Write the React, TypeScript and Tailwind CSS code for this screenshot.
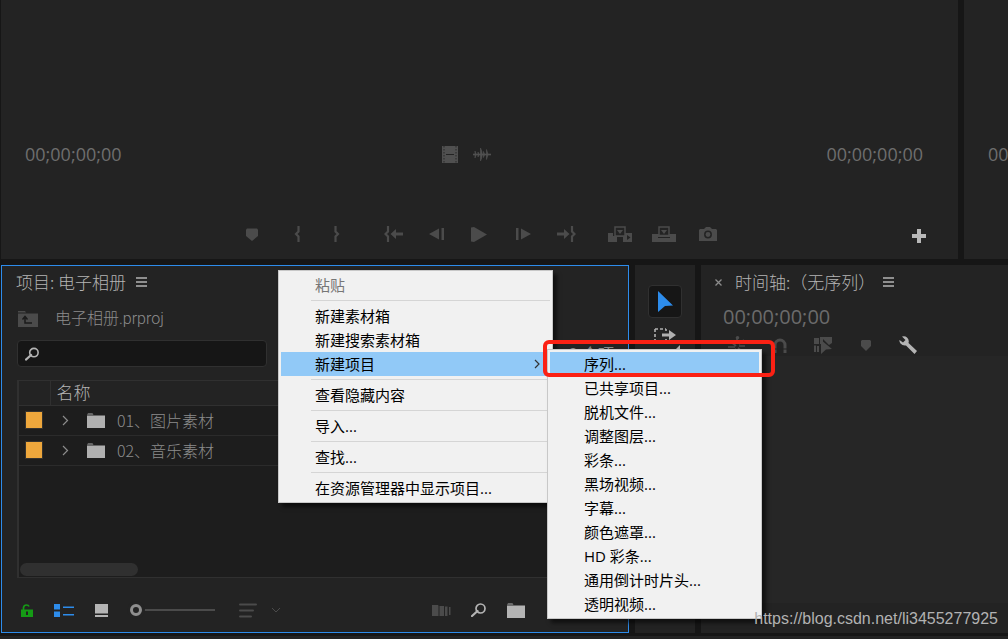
import React from "react";

const CREATE_ITEMS = [
    "序列...",
    "已共享项目...",
    "脱机文件...",
    "调整图层...",
    "彩条...",
    "黑场视频...",
    "字幕...",
    "颜色遮罩...",
    "HD 彩条...",
    "通用倒计时片头...",
    "透明视频...",
];

const CONTEXT_GROUPS = [
    ["粘贴"],
    ["新建素材箱", "新建搜索素材箱", "新建项目"],
    ["查看隐藏内容"],
    ["导入..."],
    ["查找..."],
    ["在资源管理器中显示项目..."],
];

const BINS = ["01、图片素材", "02、音乐素材"];

export default function App() {
    return (
        <div className="relative flex min-h-screen w-full flex-col overflow-hidden bg-[#161616] font-['Open_Sans','Noto_Sans_CJK_SC',sans-serif] text-[#b4b4b4]">
            <div className="flex h-[259px] gap-1.5 pl-px">
                <SourceMonitor />
                <section className="w-11 overflow-hidden bg-[#232323] pt-[142px] pl-6">
                    <Timecode />
                </section>
            </div>

            <div className="mt-1.5 grid flex-1 grid-cols-[minmax(0,628fr)_60px_minmax(0,307fr)] gap-1.5 pl-px">
                <ProjectPanel />
                <ToolPanel />
                <TimelinePanel />
            </div>
            <div className="mt-[3px] h-[3px] bg-[#232323]" />

            <ContextMenu />
            <CreateMenu />

            {/* Highlight frame over the first entry */}
            <div className="pointer-events-none absolute top-[340px] left-[543px] h-[37px] w-[232px] rounded-md border-4 border-[#fb2114]" />
            <a
                href="#blog"
                className="absolute right-2.5 bottom-2 font-['Liberation_Sans',sans-serif] text-base leading-6 text-[#b2b2b2]"
            >
                https://blog.csdn.net/li3455277925
            </a>
        </div>
    );
}

function Timecode({ large = false }: { large?: boolean }) {
    return (
        <span
            className={
                large
                    ? "text-xl leading-6 font-medium whitespace-nowrap text-[#6b6b6b]"
                    : "text-lg leading-6 font-medium whitespace-nowrap text-[#6e6e6e]"
            }
        >
            00;00;00;00
        </span>
    );
}

function IconButton({
    label,
    className = "w-[43px]",
    children,
}: {
    label: string;
    className?: string;
    children: React.ReactNode;
}) {
    return (
        <button type="button" aria-label={label} className={`flex h-6 shrink-0 items-center justify-center ${className}`}>
            {children}
        </button>
    );
}

function Icon({ w, h, children }: { w: number; h: number; children: React.ReactNode }) {
    return (
        <svg width={w} height={h} viewBox={`0 0 ${w} ${h}`} fill="currentColor" aria-hidden="true">
            {children}
        </svg>
    );
}

function SourceMonitor() {
    return (
        <section className="flex flex-1 flex-col bg-[#232323] pt-[142px]">
            <div className="flex h-6 items-center justify-between pr-[35px] pl-6">
                <Timecode />
                <div className="flex items-center gap-[15px] pr-4 text-[#505050]">
                    <Icon w={16} h={17}>
                        <path d="M0 0h16v17H0z" />
                        <path d="M2 0v17M14 0v17" stroke="#292929" strokeDasharray="1.5 1.5" />
                        <path d="M4 8.500h8" stroke="#232323" />
                    </Icon>
                    <Icon w={18} h={13}>
                        <path d="M0 5.700h18v1.600H0z" />
                        <path d="M2 3l1.200 3.500L2 10zM5 4l1.200 2.500L5 9zM7.500 0l1.200 3 .6 3.500-.6 3.500-1.200 3zM10.500 3.500l1.200 3-1.200 3zM13.500 1.500l1.600 5-1.600 5z" stroke="currentColor" strokeWidth=".6" />
                    </Icon>
                </div>
                <Timecode />
            </div>

            <div className="mt-[54px] grid grid-cols-[1fr_auto_1fr] items-center">
                <span />
                <div className="flex h-6 items-center text-[#4b4b4b]">
                    <IconButton label="添加标记" className="mr-[3px] w-11">
                        <MarkerIcon />
                    </IconButton>
                    <IconButton label="标记入点" className="w-10">
                        <Icon w={6} h={16}>
                            <path d="M4.500 0v5.500L2 8l2.500 2.500V16" fill="none" stroke="currentColor" strokeWidth="2.200" />
                        </Icon>
                    </IconButton>
                    <IconButton label="标记出点" className="mr-[15px] w-10">
                        <Icon w={6} h={16}>
                            <path d="M1.500 0v5.500L4 8l-2.500 2.500V16" fill="none" stroke="currentColor" strokeWidth="2.200" />
                        </Icon>
                    </IconButton>
                    <IconButton label="转到入点">
                        <Icon w={19} h={16}>
                            <path d="M4 0v5.500L1.500 8 4 10.500V16" fill="none" stroke="currentColor" strokeWidth="2.200" />
                            <path d="M6.500 8 12 3v3.500h7v3h-7V13z" />
                        </Icon>
                    </IconButton>
                    <IconButton label="后退一帧">
                        <Icon w={15} h={12}>
                            <path d="M0 6 10 .5v11zM12.500 0H15v12h-2.500z" />
                        </Icon>
                    </IconButton>
                    <IconButton label="播放">
                        <Icon w={16} h={15}>
                            <path d="M0 .5 3 0l13 7.500L3 15l-3-.5z" />
                        </Icon>
                    </IconButton>
                    <IconButton label="前进一帧" className="ml-px w-[43px]">
                        <Icon w={15} h={12}>
                            <path d="M15 6 5 .5v11zM0 0h2.500v12H0z" />
                        </Icon>
                    </IconButton>
                    <IconButton label="转到出点" className="mr-2.5 w-[43px]">
                        <Icon w={19} h={16}>
                            <path d="M15 0v5.500L17.500 8 15 10.500V16" fill="none" stroke="currentColor" strokeWidth="2.200" />
                            <path d="M12.500 8 7 3v3.500H0v3h7V13z" />
                        </Icon>
                    </IconButton>
                    <IconButton label="插入" className="w-11">
                        <Icon w={24} h={16}>
                            <path d="M0 7h5v3h11V7h8v9H15v-5H9v5H0z" />
                            <path d="M7 1h10v9H7z" fill="#232323" stroke="currentColor" strokeWidth="1.500" />
                            <path d="M9 4h6l-3 4z" />
                            <path d="m19 9 3.500 2.500L19 14z" fill="#232323" />
                        </Icon>
                    </IconButton>
                    <IconButton label="覆盖" className="w-11">
                        <Icon w={24} h={16}>
                            <path d="M0 8h24v8H0z" />
                            <path d="M7 1h10v8.500H7z" fill="#232323" stroke="currentColor" strokeWidth="1.500" />
                            <path d="M9 4h6l-3 4z" />
                            <path d="M6 11.500h12" stroke="#232323" />
                        </Icon>
                    </IconButton>
                    <IconButton label="导出帧" className="w-11">
                        <Icon w={18} h={14}>
                            <path d="M1 2h4l2-2h4l2 2h4l1 1v11H0V3z" />
                            <circle cx="9" cy="7.500" r="3.200" fill="none" stroke="#232323" strokeWidth="1.500" />
                        </Icon>
                    </IconButton>
                </div>
                <div className="flex justify-end pt-1 pr-[31px] text-[#b8b8b8]">
                    <IconButton label="按钮编辑器" className="w-4">
                        <Icon w={14} h={14}>
                            <path d="M5 0h4v5h5v4H9v5H5V9H0V5h5z" />
                        </Icon>
                    </IconButton>
                </div>
            </div>
        </section>
    );
}

function MarkerIcon() {
    return (
        <Icon w={12} h={13}>
            <path d="M0 1.500 1 .5h10l1 1V8l-6 5-6-5z" />
        </Icon>
    );
}

function SearchIcon() {
    return (
        <Icon w={15} h={14}>
            <circle cx="9.500" cy="5.500" r="4.500" fill="none" stroke="currentColor" strokeWidth="1.700" />
            <path d="M6.500 8 1 13" stroke="currentColor" strokeWidth="2.200" strokeLinecap="round" />
        </Icon>
    );
}

function FolderIcon() {
    return (
        <Icon w={18} h={15}>
            <path d="M0 1.500 1 .5h4.500l1 1zM0 2.500h18V15H0z" />
        </Icon>
    );
}

function MenuIcon() {
    return (
        <Icon w={11} h={10}>
            <path d="M0 1h11M0 5h11M0 9h11" stroke="currentColor" strokeWidth="1.300" />
        </Icon>
    );
}

function ProjectPanel() {
    return (
        <section className="flex flex-col border border-[#2d8ceb] bg-[#232323]">
            <header className="flex h-8 items-center gap-2.5 pl-3.5">
                <h2 className="font-['Noto_Sans_CJK_SC',sans-serif] text-[17px] leading-6 font-light">
                    项目: 电子相册
                </h2>
                <MenuIcon />
            </header>
            <div className="flex h-[42px] items-center gap-[17px] pl-4 text-[#4b4b4b]">
                <Icon w={20} h={16}>
                    <path d="M0 0h7l1 1.500H0zM0 2.500h20V16H0z" />
                    <path d="M7 7v5h7M4.500 8.500 7 5.500l2.500 3" fill="none" stroke="#1b1b1b" strokeWidth="1.500" />
                </Icon>
                <span className="font-['Roboto','Noto_Sans_CJK_SC',sans-serif] text-base font-light text-[#8c8c8c]">
                    电子相册.prproj
                </span>
            </div>
            <div className="flex items-center justify-between pr-3.5 pl-[15px]">
                <label className="flex h-[27px] w-[250px] items-center rounded-sm border border-[#303030] bg-[#161616] pl-[7px]">
                    <SearchIcon />
                    <input
                        type="text"
                        aria-label="搜索"
                        className="h-6 w-full min-w-0 bg-transparent px-2 text-base outline-none"
                    />
                </label>
                <span className="text-base leading-6 text-[#8c8c8c]">2 个项</span>
            </div>

            <div className="mt-[13px] mr-3 ml-[15px] flex flex-1 flex-col border border-l-2 border-[#303030] bg-[#1d1d1d]">
                <table className="w-full border-collapse text-left text-base">
                    <thead>
                        <tr className="h-6 border-b border-[#303030] bg-[#232323] text-[17px] leading-5">
                            <th className="w-[31px] border-r border-[#303030]" />
                            <th className="pl-1.5 font-light">名称</th>
                        </tr>
                    </thead>
                    <tbody>
                        {BINS.map((bin) => (
                            <tr key={bin} className="h-[30px] border-b border-[#2b2b2b] leading-5">
                                <td className="pl-1.5">
                                    <div className="size-[18px] border border-[#34322e] bg-[#eea73c]" />
                                </td>
                                <td>
                                    <div className="flex items-center pl-3 text-[#b0b0b0]">
                                        <Icon w={7} h={11}>
                                            <path d="m1 1 4.500 4.500L1 10" fill="none" stroke="#8c8c8c" strokeWidth="1.200" />
                                        </Icon>
                                        <span className="mr-3 ml-[18px]">
                                            <FolderIcon />
                                        </span>
                                        <span className="font-['Noto_Sans_CJK_SC',sans-serif] font-light text-[#8c8c8c]">
                                            {bin}
                                        </span>
                                    </div>
                                </td>
                            </tr>
                        ))}
                    </tbody>
                </table>
                <div className="mt-auto mb-px ml-px h-[13px] w-[118px] rounded-full bg-[#303030]" />
            </div>

            <footer className="flex h-[54px] items-center justify-between pt-2.5 pr-5 pl-1.5">
                <div className="flex items-center">
                    <IconButton label="切换写入状态" className="w-[37px] text-[#159b15]">
                        <Icon w={12} h={13}>
                            <path d="M2.500 7V3.500Q3 1 5.500 1 7.500 1 8 2.500" fill="none" stroke="currentColor" strokeWidth="1.700" />
                            <path d="M0 5.500h12V13H0z" />
                            <path d="M5 7.500h2v3.500H5z" fill="#232323" />
                        </Icon>
                    </IconButton>
                    <IconButton label="列表视图" className="w-[38px] text-[#2d8ceb]">
                        <Icon w={20} h={13}>
                            <path d="M0 0h6v5.500H0zM0 7.500h6V13H0zM9 2.500h11V4H9zM9 10h11v1.500H9z" />
                        </Icon>
                    </IconButton>
                    <IconButton label="图标视图" className="w-[37px]">
                        <Icon w={13} h={13}>
                            <path d="M0 0h13v9.500H0zM0 11h13v2H0z" />
                        </Icon>
                    </IconButton>
                    <input
                        type="range"
                        aria-label="缩放"
                        defaultValue={0}
                        className="mr-3.5 ml-2.5 h-4 w-[85px] appearance-none bg-transparent [&::-webkit-slider-runnable-track]:h-0.5 [&::-webkit-slider-runnable-track]:bg-[#4b4b4b] [&::-webkit-slider-thumb]:-mt-[5px] [&::-webkit-slider-thumb]:size-3 [&::-webkit-slider-thumb]:appearance-none [&::-webkit-slider-thumb]:rounded-full [&::-webkit-slider-thumb]:border-[3px] [&::-webkit-slider-thumb]:border-[#8f8f8f] [&::-webkit-slider-thumb]:bg-[#232323] [&::-webkit-slider-thumb]:shadow-[0_0_0_3px_#232323]"
                    />
                    <IconButton label="排序图标" className="w-[37px] text-[#4b4b4b]">
                        <Icon w={18} h={15}>
                            <path d="M1 1.500h16M1 7.500h13M1 13.500h11" stroke="currentColor" strokeWidth="2" strokeLinecap="round" />
                        </Icon>
                    </IconButton>
                    <IconButton label="排序选项" className="w-5 text-[#4b4b4b]">
                        <Icon w={10} h={6}>
                            <path d="m1 1 4 4 4-4" fill="none" stroke="currentColor" />
                        </Icon>
                    </IconButton>
                </div>
                <div className="flex items-center">
                    <IconButton label="自动匹配序列" className="w-[37px] text-[#4b4b4b]">
                        <Icon w={19} h={11}>
                            <path d="M0 0h6l.5 1V11H0zM7.500 1H12v10H7.500zM13 1.500h2.500V11H13zM17 2h1.500v8H17z" />
                        </Icon>
                    </IconButton>
                    <IconButton label="查找" className="w-[37px]">
                        <SearchIcon />
                    </IconButton>
                    <IconButton label="新建素材箱" className="w-[37px]">
                        <FolderIcon />
                    </IconButton>
                    <IconButton label="新建项" className="w-[37px]">
                        <Icon w={10} h={12}>
                            <path d="M0 0h10v12H4L0 8z" />
                        </Icon>
                    </IconButton>
                    <IconButton label="清除" className="w-[37px] text-[#4b4b4b]">
                        <Icon w={12} h={13}>
                            <path d="M0 1h12v2H0zM1 4h10l-1 9H2z" />
                        </Icon>
                    </IconButton>
                </div>
            </footer>
        </section>
    );
}

function ToolPanel() {
    return (
        <section className="flex flex-col items-center bg-[#232323] pt-5">
            <button
                type="button"
                aria-label="选择工具"
                className="flex h-[33px] w-[34px] items-center justify-center rounded-sm border border-[#303030] bg-[#161616] text-[#2d8ceb]"
            >
                <Icon w={16} h={21}>
                    <path d="M1 0 16 14.500l-8 .5-7 6z" />
                </Icon>
            </button>
            <button
                type="button"
                aria-label="向前选择轨道工具"
                className="relative flex h-[33px] w-[34px] items-center justify-center text-[#b0b0b0]"
            >
                <Icon w={22} h={14}>
                    <path d="M1 1h11M1 13h11M1 1v12M12 1v2M12 11v2" fill="none" stroke="currentColor" strokeWidth="1.600" strokeDasharray="3 2" />
                    <path d="M8 5.500h7V2l7 5-7 5V8.500H8z" />
                </Icon>
                <span className="absolute right-0.5 bottom-0 border-b-6 border-l-6 border-b-[#b0b0b0] border-l-transparent" />
            </button>
        </section>
    );
}

function TimelinePanel() {
    return (
        <section className="flex flex-col bg-[#232323]">
            <header className="flex h-[34px] items-center pl-3.5">
                <button type="button" aria-label="关闭" className="mr-[13px] text-[#8c8c8c]">
                    <Icon w={7} h={7}>
                        <path d="m.5.5 6 6m0-6-6 6" stroke="currentColor" strokeWidth="1.300" />
                    </Icon>
                </button>
                <h2 className="mr-2 font-['Noto_Sans_CJK_SC',sans-serif] text-[17px] leading-6 font-light whitespace-nowrap">
                    时间轴:（无序列）
                </h2>
                <MenuIcon />
            </header>
            <div className="flex h-9 items-center pl-[22px]">
                <Timecode large />
            </div>
            <div className="flex h-5 items-center pl-3.5 text-[#4b4b4b]">
                <IconButton label="嵌套序列">
                    <Icon w={18} h={18}>
                        <path d="M9 7V1m-1 9L2 5m5 6H0m8 2-5 4m7-5 6 5m-5-7h6m-6-2 5-4" fill="none" stroke="currentColor" strokeWidth="1.700" />
                        <circle cx="9.500" cy="1.800" r="1.800" />
                    </Icon>
                </IconButton>
                <IconButton label="对齐">
                    <Icon w={14} h={15}>
                        <path d="M2 15V7a5 5 0 0 1 10 0v8" fill="none" stroke="currentColor" strokeWidth="3" />
                        <path d="M0 11h14" stroke="#232323" />
                    </Icon>
                </IconButton>
                <IconButton label="链接选择项">
                    <Icon w={18} h={17}>
                        <path d="M0 1h5v6H0zM6 0h12v6l-3 2-6-6v5H6zM0 8.500h2V15H0zM3 9h2v6H3z" />
                        <path d="m7 3 11 9-6 .5L7 17z" />
                    </Icon>
                </IconButton>
                <IconButton label="添加标记">
                    <Icon w={10} h={11}>
                        <path d="M0 1 1 0h8l1 1v5l-5 5-5-5z" />
                    </Icon>
                </IconButton>
                <IconButton label="时间轴显示设置" className="w-[42px] text-[#b4b4b4]">
                    <Icon w={18} h={18}>
                        <path d="M3 .5Q6-.5 8 1.500 10.500 4 9.500 7l8.500 8-2.500 3L7 9.500Q3.500 10 1.500 7.500 0 5.500.5 4L4 6.500 6.500 4z" />
                    </Icon>
                </IconButton>
            </div>
            <div className="mt-px flex-1 bg-[#262626]" />
            <div className="h-[30px]" />
        </section>
    );
}

function ContextMenu() {
    return (
        <div
            role="menu"
            className="absolute top-[270px] left-[278px] w-[275px] border border-[#c8c8c8] bg-[#f1f1f1] p-0.5 text-[15px] leading-6 text-black shadow-[4px_4px_4px_rgba(0,0,0,0.55)]"
        >
            {CONTEXT_GROUPS.map((group, i) => (
                <div key={i}>
                    {i > 0 && <div role="separator" className="my-[3px] ml-[30px] h-px bg-[#d5d5d5]" />}
                    {group.map((item) => (
                        <MenuItem key={item} label={item} active={item === "新建项目"} disabled={item === "粘贴"} arrow={item === "新建项目"} />
                    ))}
                </div>
            ))}
        </div>
    );
}

function CreateMenu() {
    return (
        <div
            role="menu"
            className="absolute top-[349px] left-[547px] w-[215px] border border-[#c8c8c8] bg-[#f1f1f1] p-0.5 text-[15px] leading-6 text-black shadow-[4px_4px_4px_rgba(0,0,0,0.55)]"
        >
            {CREATE_ITEMS.map((item, i) => (
                <MenuItem key={item} label={item} active={i === 0} />
            ))}
        </div>
    );
}

function MenuItem({
    label,
    active = false,
    disabled = false,
    arrow = false,
}: {
    label: string;
    active?: boolean;
    disabled?: boolean;
    arrow?: boolean;
}) {
    return (
        <button
            type="button"
            role="menuitem"
            disabled={disabled}
            className={`flex h-6 w-full items-center justify-between pr-2.5 pl-[34px] disabled:text-[#767676] ${active ? "bg-[#91c9f7]" : ""}`}
        >
            {label}
            {arrow && (
                <Icon w={6} h={10}>
                    <path d="m1 1 4 4-4 4" fill="none" stroke="#333" strokeWidth="1.200" />
                </Icon>
            )}
        </button>
    );
}
